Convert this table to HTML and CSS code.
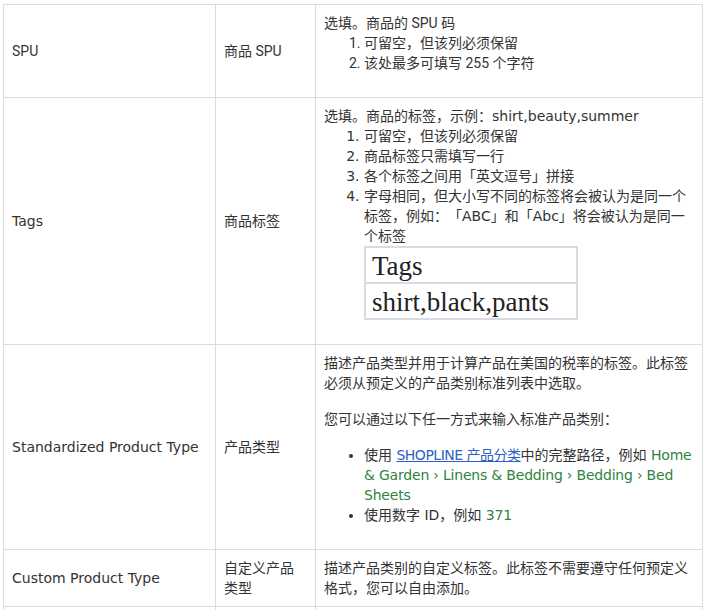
FILE: index.html
```html
<!DOCTYPE html>
<html lang="zh-CN">
<head>
<meta charset="utf-8">
<title>商品字段说明</title>
<link rel="stylesheet" href="styles.css">
</head>
<body>
<div class="page">
  <table class="fields">
    <colgroup>
      <col class="c-name">
      <col class="c-label">
      <col class="c-desc">
    </colgroup>
    <tbody>
      <tr class="row-roboto">
        <td class="cell-mid">SPU</td>
        <td class="cell-mid">商品 SPU</td>
        <td class="cell-top">
          选填。商品的 SPU 码
          <ol class="list">
            <li>可留空，但该列必须保留</li>
            <li>该处最多可填写 255 个字符</li>
          </ol>
        </td>
      </tr>
      <tr>
        <td class="cell-mid">Tags</td>
        <td class="cell-mid">商品标签</td>
        <td class="cell-top">
          选填。商品的标签，示例：shirt,beauty,summer
          <ol class="list">
            <li>可留空，但该列必须保留</li>
            <li>商品标签只需填写一行</li>
            <li>各个标签之间用「英文逗号」拼接</li>
            <li>字母相同，但大小写不同的标签将会被认为是同一个标签，例如：「ABC」和「Abc」将会被认为是同一个标签
              <div class="sample">
                <div class="sample-row">Tags</div>
                <div class="sample-row">shirt,black,pants</div>
              </div>
            </li>
          </ol>
        </td>
      </tr>
      <tr>
        <td class="cell-mid">Standardized Product Type</td>
        <td class="cell-mid">产品类型</td>
        <td class="cell-top">
          <p class="para">描述产品类型并用于计算产品在美国的税率的标签。此标签必须从预定义的产品类别标准列表中选取。</p>
          <p class="para">您可以通过以下任一方式来输入标准产品类别：</p>
          <ul class="bullets">
            <li>使用 <a class="link" href="#">SHOPLINE 产品分类</a>中的完整路径，例如 <span class="code">Home &amp; Garden › Linens &amp; Bedding › Bedding › Bed Sheets</span></li>
            <li>使用数字 ID，例如 <span class="code">371</span></li>
          </ul>
        </td>
      </tr>
      <tr>
        <td class="cell-mid">Custom Product Type</td>
        <td class="cell-mid">自定义产品类型</td>
        <td class="cell-top">描述产品类别的自定义标签。此标签不需要遵守任何预定义格式，您可以自由添加。</td>
      </tr>
      <tr>
        <td class="cell-mid">&nbsp;</td>
        <td class="cell-mid">&nbsp;</td>
        <td class="cell-top">&nbsp;</td>
      </tr>
    </tbody>
  </table>
</div>
</body>
</html>
```

FILE: styles.css
```css
html, body {
  margin: 0;
  padding: 0;
  background: #ffffff;
}

.page {
  padding: 4px 0 0 3px;
  font-family: "DejaVu Sans", "Noto Sans CJK SC", sans-serif;
  font-size: 14px;
  line-height: 20px;
  color: #333333;
  text-spacing-trim: space-all;
}

.fields {
  border-collapse: collapse;
  table-layout: fixed;
  width: 699px;
}

.c-name { width: 212px; }
.c-label { width: 100px; }
.c-desc { width: 387px; }

.fields td {
  border: 1px solid #dcdcdc;
  padding: 8px;
  word-break: break-word;
}

.cell-mid { vertical-align: middle; }
.cell-top { vertical-align: top; }

.row-roboto td {
  font-family: Roboto, "Noto Sans CJK SC", sans-serif;
}

.list {
  margin: 0 0 16px 0;
  padding-left: 40px;
}

.para {
  margin: 0 0 16px 0;
}

.bullets {
  margin: 0 0 16px 0;
  padding-left: 40px;
}

.link {
  color: #2a5fc4;
  text-decoration: underline;
  letter-spacing: -0.5px;
}

.code {
  color: #2e8540;
  letter-spacing: -0.2px;
}

.sample {
  width: 210px;
  border: 2px solid #d8dae6;
  font-family: "Liberation Serif", serif;
  font-size: 27px;
  color: #222222;
}

.sample-row {
  padding: 0 6px;
  height: 34px;
  line-height: 36px;
}

.sample-row + .sample-row {
  border-top: 2px solid #d8dae6;
}
```
